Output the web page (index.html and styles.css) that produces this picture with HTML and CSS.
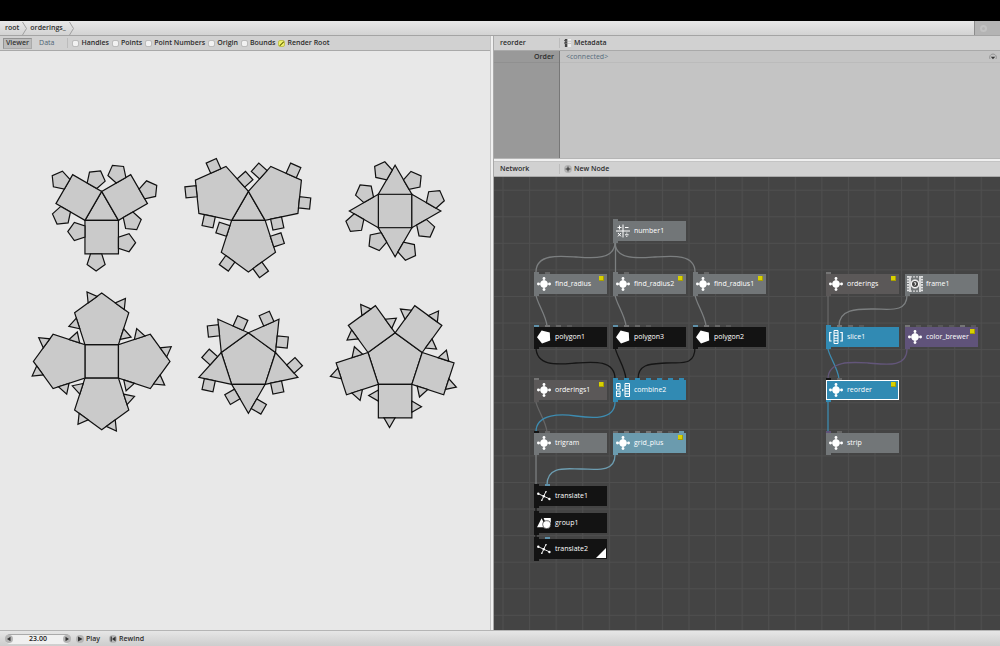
FILE: index.html
```html
<!DOCTYPE html>
<html lang="en">
<head>
<meta charset="utf-8">
<title>orderings_</title>
<link rel="stylesheet" href="styles.css">
</head>
<body>
<svg class="defs" aria-hidden="true">
  <defs>
    <polygon id="p3" points="-16.75,0 16.75,0 0,29.01"/>
    <polygon id="p4" points="-16.75,0 16.75,0 16.75,33.5 -16.75,33.5"/>
    <polygon id="p5" points="-16.75,0 16.75,0 27.1,31.86 0,51.55 -27.1,31.86"/>
    <g id="arm45"><use href="#p4"/>
      <use href="#p5" transform="translate(0 16.75) rotate(-90) translate(-5.58 16.75) scale(.333)"/>
      <use href="#p5" transform="translate(0 16.75) translate(-5.58 16.75) scale(.333)"/>
      <use href="#p5" transform="translate(0 16.75) rotate(90) translate(-5.58 16.75) scale(.333)"/></g>
    <g id="arm43"><use href="#p4"/>
      <use href="#p3" transform="translate(0 16.75) rotate(-90) translate(-5.58 16.75) scale(.333)"/>
      <use href="#p3" transform="translate(0 16.75) translate(-5.58 16.75) scale(.333)"/>
      <use href="#p3" transform="translate(0 16.75) rotate(90) translate(-5.58 16.75) scale(.333)"/></g>
    <g id="arm54"><use href="#p5"/>
      <use href="#p4" transform="translate(0 23.05) rotate(252) translate(-5.58 23.05) scale(.333)"/>
      <use href="#p4" transform="translate(0 23.05) rotate(324) translate(-5.58 23.05) scale(.333)"/>
      <use href="#p4" transform="translate(0 23.05) rotate(36) translate(-5.58 23.05) scale(.333)"/>
      <use href="#p4" transform="translate(0 23.05) rotate(108) translate(-5.58 23.05) scale(.333)"/></g>
    <g id="arm53"><use href="#p5"/>
      <use href="#p3" transform="translate(0 23.05) rotate(252) translate(-5.58 23.05) scale(.333)"/>
      <use href="#p3" transform="translate(0 23.05) rotate(324) translate(-5.58 23.05) scale(.333)"/>
      <use href="#p3" transform="translate(0 23.05) rotate(36) translate(-5.58 23.05) scale(.333)"/>
      <use href="#p3" transform="translate(0 23.05) rotate(108) translate(-5.58 23.05) scale(.333)"/></g>
    <g id="arm35"><use href="#p3"/>
      <use href="#p5" transform="translate(0 9.67) rotate(300) translate(-5.58 9.67) scale(.333)"/>
      <use href="#p5" transform="translate(0 9.67) rotate(60) translate(-5.58 9.67) scale(.333)"/></g>
    <g id="arm34"><use href="#p3"/>
      <use href="#p4" transform="translate(0 9.67) rotate(300) translate(-5.58 9.67) scale(.333)"/>
      <use href="#p4" transform="translate(0 9.67) rotate(60) translate(-5.58 9.67) scale(.333)"/></g>

    <symbol id="i-net" viewBox="0 0 14 14"><path d="M7 1.5v11M1.5 7h11" stroke="#fff" stroke-width="1.2"/><circle cx="7" cy="7" r="3.7" fill="#fff"/><circle cx="7" cy="1.4" r="1.4" fill="#fff"/><circle cx="7" cy="12.6" r="1.4" fill="#fff"/><circle cx="1.4" cy="7" r="1.4" fill="#fff"/><circle cx="12.6" cy="7" r="1.4" fill="#fff"/></symbol>
    <symbol id="i-num" viewBox="0 0 14 14"><path d="M7 .5v13M0 7h14M1.5 3.5h4M3.5 1.5v4M9 3.5h3.5M2 9l3 3.4M5 9l-3 3.4M9 10.8h3.6M10.8 8.6v1M10.8 12v1" stroke="#fff" stroke-width="1" fill="none"/></symbol>
    <symbol id="i-poly" viewBox="0 0 14 14"><path fill="#fff" d="M0 7.2 4.6.6 12.8 2.6 13.2 10.6 5 13.4Z"/></symbol>
    <symbol id="i-combine" viewBox="0 0 14 14"><path d="M.5.5h3.6v5.6H.5zM.5 8h3.6v5.5H.5zM.5 3.3h3.6M.5 10.8h3.6M9 .5h4.5v13H9zM9 3h4.5M9 5.6h4.5M9 8.2h4.5M9 10.8h4.5" stroke="#fff" stroke-width="1" fill="none"/><path fill="#fff" d="m6 5.8 2 1.3-2 1.3z"/></symbol>
    <symbol id="i-slice" viewBox="0 0 14 14"><path d="M2.6 2.5H.7v8.5h1.9M11.2 2.5h2v8.5h-2" stroke="#fff" stroke-width="1.2" fill="none"/><path d="M5 .5h4v13H5zM5 3h4M5 5.6h4M5 8.2h4M5 10.8h4" stroke="#fff" stroke-width="1" fill="none"/></symbol>
    <symbol id="i-move" viewBox="0 0 14 14"><path d="M.8 4.5 12.8 10M8.8 2.8 4.8 11.4" stroke="#fff" stroke-width=".9" fill="none"/><g fill="#fff"><circle cx="1.3" cy="4.7" r="1.2"/><circle cx="12.4" cy="10" r="1.2"/><circle cx="9" cy="2.8" r=".8"/><circle cx="4.8" cy="11.2" r=".8"/><circle cx="6.8" cy="7.2" r="1.2"/></g></symbol>
    <symbol id="i-group" viewBox="0 0 14 14"><path fill="#fff" d="M4.6 2.2 9 11.2H0zM6.6 2h7.2v6.8H9.5z"/><circle cx="9.7" cy="8.7" r="4" fill="#fff" stroke="#131313" stroke-width=".6"/></symbol>
    <symbol id="i-film" viewBox="0 0 16 16"><path d="M1 0v16M15 0v16" stroke="#fff" stroke-width="1.6" stroke-dasharray="1.7 1"/><path d="M3 0v16M13 0v16" stroke="#fff" stroke-width="1.4"/><path d="M3 .8h10M3 15.2h10" stroke="#d8d8d8" stroke-width="1.2" stroke-dasharray="2 1"/><circle cx="8" cy="8" r="4.3" fill="#fff" stroke="#d0d0d0" stroke-width=".8"/><circle cx="8" cy="8" r="3" fill="#444"/><path d="M6.9 6.8h1.8v1.2L7.8 9.5" stroke="#fff" stroke-width=".9" fill="none"/></symbol>
    <pattern id="grid" x="8.5" y="12.7" width="26.57" height="26.57" patternUnits="userSpaceOnUse"><path d="M.5 0v26.57M0 .5h26.57" stroke="#4f4f4f" stroke-width="1"/></pattern>
  </defs>
</svg>

<div class="app">
  <div class="titlebar"></div>
  <nav class="address">
    <button class="crumb">root</button>
    <svg class="chev" viewBox="0 0 5 13"><path d="M.5 0 4.5 6.5.5 13"/></svg>
    <button class="crumb">orderings_</button>
    <svg class="chev" viewBox="0 0 5 13"><path d="M.5 0 4.5 6.5.5 13"/></svg>
    <div class="busy"><span class="busy-dot"></span></div>
  </nav>

  <main class="panes">
    <section class="viewer-pane">
      <header class="bar">
        <button class="tab tab-on">Viewer</button>
        <button class="tab">Data</button>
        <div class="checks">
          <label class="check"><input type="checkbox">Handles</label>
          <label class="check"><input type="checkbox">Points</label>
          <label class="check"><input type="checkbox">Point Numbers</label>
          <label class="check"><input type="checkbox">Origin</label>
          <label class="check"><input type="checkbox">Bounds</label>
          <label class="check"><input type="checkbox" checked>Render Root</label>
        </div>
      </header>
      <svg class="drawing" viewBox="0 51 490 579" preserveAspectRatio="xMidYMin meet">
        <g transform="translate(101.7 210.7)">
          <use href="#p3" transform="rotate(180) translate(0 -9.67)"/>
          <use href="#arm45" transform="translate(0 9.67)"/>
          <use href="#arm45" transform="rotate(120) translate(0 9.67)"/>
          <use href="#arm45" transform="rotate(240) translate(0 9.67)"/>
        </g>
        <g transform="translate(248.4 210.7)">
          <use href="#p3" transform="rotate(180) translate(0 -9.67)"/>
          <use href="#arm54" transform="translate(0 9.67)"/>
          <use href="#arm54" transform="rotate(120) translate(0 9.67)"/>
          <use href="#arm54" transform="rotate(240) translate(0 9.67)"/>
        </g>
        <g transform="translate(395.1 211)">
          <use href="#p4" transform="translate(0 -16.75)"/>
          <use href="#arm35" transform="translate(0 16.75)"/>
          <use href="#arm35" transform="rotate(90) translate(0 16.75)"/>
          <use href="#arm35" transform="rotate(180) translate(0 16.75)"/>
          <use href="#arm35" transform="rotate(270) translate(0 16.75)"/>
        </g>
        <g transform="translate(101.7 361.4)">
          <use href="#p4" transform="translate(0 -16.75)"/>
          <use href="#arm53" transform="translate(0 16.75)"/>
          <use href="#arm53" transform="rotate(90) translate(0 16.75)"/>
          <use href="#arm53" transform="rotate(180) translate(0 16.75)"/>
          <use href="#arm53" transform="rotate(270) translate(0 16.75)"/>
        </g>
        <g transform="translate(248.4 361.3)">
          <use href="#p5" transform="rotate(180) translate(0 -23.05)"/>
          <use href="#arm34" transform="translate(0 23.05)"/>
          <use href="#arm34" transform="rotate(72) translate(0 23.05)"/>
          <use href="#arm34" transform="rotate(144) translate(0 23.05)"/>
          <use href="#arm34" transform="rotate(216) translate(0 23.05)"/>
          <use href="#arm34" transform="rotate(288) translate(0 23.05)"/>
        </g>
        <g transform="translate(395.1 361.3)">
          <use href="#p5" transform="rotate(180) translate(0 -23.05)"/>
          <use href="#arm43" transform="translate(0 23.05)"/>
          <use href="#arm43" transform="rotate(72) translate(0 23.05)"/>
          <use href="#arm43" transform="rotate(144) translate(0 23.05)"/>
          <use href="#arm43" transform="rotate(216) translate(0 23.05)"/>
          <use href="#arm43" transform="rotate(288) translate(0 23.05)"/>
        </g>
      </svg>
    </section>
    <div class="split-v"></div>
    <section class="side">
      <header class="bar">
        <span class="bar-title">reorder</span>
        <button class="tool"><svg class="tool-icon" viewBox="0 0 9 9"><path fill="#444" d="M1 0h3v9H1zM0 1h1v1H0zM0 4h1v1H0z"/><path fill="#eee" d="M4 0h4v9H4z"/><path d="M4 2.5h4M4 5h4" stroke="#aaa" stroke-width=".7"/><path d="M1.5 2.5H4M1.5 5H4" stroke="#999" stroke-width=".7"/></svg>Metadata</button>
      </header>
      <div class="params">
        <div class="param-names"><div class="param-name">Order</div></div>
        <div class="param-values">
          <div class="param-value">&lt;connected&gt;
            <button class="param-menu" aria-label="Options"><svg viewBox="0 0 8 8"><path d="M1 6a3.4 3.4 0 1 1 6 0" fill="none" stroke="#888" stroke-width=".8"/><path d="M1.8 3.8h4.4L4 6.2z" fill="#333"/></svg></button>
          </div>
        </div>
      </div>
      <div class="split-h"></div>
      <header class="bar">
        <span class="bar-title">Network</span>
        <button class="tool"><svg class="tool-icon" viewBox="0 0 9 9"><circle cx="4.5" cy="4.5" r="4.4" fill="#b2b2b2"/><path d="M4.5 1.8v5.4M1.8 4.5h5.4" stroke="#222" stroke-width="1"/></svg>New Node</button>
      </header>
      <div class="canvas">
        <svg class="wires">
          <rect width="100%" height="100%" fill="url(#grid)"/>
          <g class="w-grey">
            <path d="M121 65C121 84 96 81 82 80S42 76 42 95"/><path d="M121.500 65V95"/><path d="M121 65C121 84 146 81 161 80S201 76 201 95"/>
            <path d="M42 118C43 126 52 138 53 149"/><path d="M121 118C122 126 131 138 132 149"/><path d="M201 118C202 126 211 138 212 149"/>
            <path d="M42 278V308"/><path d="M413 118C413 136 395 132 380 132S345 131 345 149"/>
          </g>
          <g class="w-dim"><path d="M42 225C43 232 52 244 53 255"/><path d="M334 118V149"/></g>
          <g class="w-black">
            <path d="M42 170C42 191 67 187 82 186S121 182 121 202"/><path d="M121 170C122 178 131 190 132 202"/><path d="M201 170C201 190 186 185 172 186S144 186 144 202"/>
            <path d="M42 329V336M42 356V362"/>
          </g>
          <g class="w-blue"><path d="M121 225C121 244 96 241 82 239S42 236 42 255"/><path d="M334 172C335 179 344 191 345 202"/><path d="M334 225V255"/></g>
          <g class="w-steel"><path d="M121 278C121 296 101 292 87 292S53 288 53 308"/></g>
          <g class="w-purple"><path d="M413 172C413 192 389 187 374 186S334 183 334 202"/></g>
        </svg>

        <div class="node grey c1 r0"><div class="in"><i></i></div><svg class="icon"><use href="#i-num"/></svg>number1<i class="out"></i></div>

        <div class="node grey c0 r1"><div class="in"><i></i><i class="g2"></i></div><svg class="icon"><use href="#i-net"/></svg>find_radius<b class="flag"></b><i class="out"></i></div>
        <div class="node grey c1 r1"><div class="in"><i></i><i class="g2"></i></div><svg class="icon"><use href="#i-net"/></svg>find_radius2<b class="flag"></b><i class="out"></i></div>
        <div class="node grey c2 r1"><div class="in"><i></i><i class="g2"></i></div><svg class="icon"><use href="#i-net"/></svg>find_radius1<b class="flag"></b><i class="out"></i></div>
        <div class="node dark c3 r1"><div class="in"><i class="g1"></i></div><svg class="icon"><use href="#i-net"/></svg>orderings<b class="flag"></b><i class="out"></i></div>
        <div class="node grey c4 r1"><svg class="icon icon-film"><use href="#i-film"/></svg>frame1<i class="out"></i></div>

        <div class="node black c0 r2"><div class="in"><i class="pb"></i><i class="g1"></i><i class="g2"></i><i class="g3"></i></div><svg class="icon"><use href="#i-poly"/></svg>polygon1<i class="out"></i></div>
        <div class="node black c1 r2"><div class="in"><i class="pb"></i><i class="g1"></i><i class="g2"></i><i class="g3"></i></div><svg class="icon"><use href="#i-poly"/></svg>polygon3<i class="out"></i></div>
        <div class="node black c2 r2"><div class="in"><i class="pb"></i><i class="g1"></i><i class="g2"></i><i class="g3"></i></div><svg class="icon"><use href="#i-poly"/></svg>polygon2<i class="out"></i></div>
        <div class="node blue c3 r2"><div class="in"><i></i><i class="g1"></i><i class="g2"></i><i class="g3"></i></div><svg class="icon"><use href="#i-slice"/></svg>slice1<i class="out"></i></div>
        <div class="node purple c4 r2"><div class="in"><i class="g1"></i><i class="g3"></i><i class="g3"></i><i class="g3"></i><i class="g3"></i><i class="g1"></i><i class="g3"></i></div><svg class="icon"><use href="#i-net"/></svg>color_brewer<b class="flag"></b><i class="out"></i></div>

        <div class="node dark c0 r3"><div class="in"><i class="g1"></i></div><svg class="icon"><use href="#i-net"/></svg>orderings1<b class="flag"></b><i class="out"></i></div>
        <div class="node blue c1 r3"><div class="in"><i></i><i></i><i></i><i></i><i></i><i></i><i></i></div><svg class="icon"><use href="#i-combine"/></svg>combine2<i class="out"></i></div>
        <div class="node blue selected c3 r3"><div class="in"><i class="pk"></i><i class="g2"></i></div><svg class="icon"><use href="#i-net"/></svg>reorder<b class="flag"></b><i class="out"></i></div>

        <div class="node grey c0 r4"><div class="in"><i class="pk"></i><i class="g2"></i></div><svg class="icon"><use href="#i-net"/></svg>trigram<i class="out"></i></div>
        <div class="node steel c1 r4"><div class="in"><i class="g2"></i><i class="g1"></i><i class="g1"></i><i class="g1"></i><i class="g1"></i><i class="g3"></i><i></i></div><svg class="icon"><use href="#i-net"/></svg>grid_plus<b class="flag"></b><i class="out"></i></div>
        <div class="node grey c3 r4"><div class="in"><i class="pp"></i><i class="g2"></i></div><svg class="icon"><use href="#i-net"/></svg>strip<i class="out"></i></div>

        <div class="node black c0 r5"><div class="in"><i></i><i class="pb"></i></div><svg class="icon"><use href="#i-move"/></svg>translate1<i class="out"></i></div>
        <div class="node black c0 r6"><div class="in"><i></i></div><svg class="icon"><use href="#i-group"/></svg>group1<i class="out"></i></div>
        <div class="node black c0 r7"><div class="in"><i></i><i class="pb"></i></div><svg class="icon"><use href="#i-move"/></svg>translate2<b class="rendered"></b><i class="out"></i></div>
      </div>
    </section>
  </main>

  <footer class="player">
    <div class="stepper">
      <button class="round" aria-label="Previous frame"><svg viewBox="0 0 8 8"><path d="M5.5 1.8v4.4L2 4z"/></svg></button>
      <input class="frame" type="text" value="23.00" aria-label="Frame">
      <button class="round" aria-label="Next frame"><svg viewBox="0 0 8 8"><path d="M2.5 1.8v4.4L6 4z"/></svg></button>
    </div>
    <button class="play"><span class="round"><svg viewBox="0 0 8 8"><path d="M2 1.4v5.2L6.6 4z"/></svg></span>Play</button>
    <button class="play"><span class="round"><svg viewBox="0 0 8 8"><path d="M1.6 1.4h1.2v5.2H1.6zM6.6 1.4v5.2L3 4z"/></svg></span>Rewind</button>
  </footer>
</div>
</body>
</html>
```

FILE: styles.css
```css
* { box-sizing: border-box; }
body { margin: 0; font: 7px/10px "Open Sans", "Noto Sans", sans-serif; color: #2c2c2c; background: #e8e8e8; }
button { font: inherit; color: inherit; background: none; border: 0; padding: 0; margin: 0; display: flex; align-items: center; }
.defs { position: absolute; width: 0; height: 0; }
.app { min-height: 100vh; display: flex; flex-direction: column; }
.titlebar { height: 21px; background: #000; }

.address { height: 15px; display: flex; align-items: center; padding-left: 5px; font-weight: 600; background: linear-gradient(#e8e8e8, #d3d3d3); border-bottom: 1px solid #a4a4a4; }
.chev { width: 5px; height: 13px; margin: 0 3px; fill: none; stroke: #a0a0a0; }
.busy { margin-left: auto; width: 26px; align-self: stretch; background: #b4b4b4; border-left: 1px solid #8c8c8c; display: flex; align-items: center; padding-left: 5px; }
.busy-dot { width: 7px; height: 7px; border-radius: 50%; border: 2px solid #c2c2c2; }

.panes { flex: 1; display: grid; grid-template-columns: 490fr 4px 506fr; }
.viewer-pane, .side { display: flex; flex-direction: column; min-width: 0; }
.bar { height: 15px; flex: none; display: flex; align-items: center; font-weight: 600; background: #d1d1d1; border-bottom: 1px solid #a9a9a9; }
.tab { height: 11px; padding: 0 2px; margin-left: 3px; font-weight: 400; color: #4d6473; border: 1px solid transparent; }
.tab + .tab { margin-left: 4px; }
.tab-on { font-weight: 600; color: #333; background: #bcbcbc; border-color: #939393 #aaa #aaa #939393; }
.checks { display: flex; align-items: center; gap: 4px; margin-left: 10px; padding-left: 5px; border-left: 1px solid #bcbcbc; }
.check { display: flex; align-items: center; gap: 3px; white-space: nowrap; }
.check input { appearance: none; width: 5px; height: 5px; margin: 0; background: #f2f2f2; border-radius: 1px; outline: 1px solid #bdbdbd; }
.check input:checked { background: linear-gradient(135deg, #eef06a 50%, #8c8c20 50% 65%, #eef06a 65%); outline-color: #c2c250; }
.drawing { display: block; width: 100%; fill: #cacaca; stroke: #111; stroke-width: 1.2; }
.drawing use, .defs polygon { vector-effect: non-scaling-stroke; }

.split-v { background: #f0f0f0; border-left: 1px solid #c4c4c4; border-right: 1px solid #aaa; }
.split-h { height: 4px; background: #f0f0f0; border-top: 1px solid #b5b5b5; border-bottom: 1px solid #c4c4c4; }
.bar-title { width: 66px; padding-left: 6px; border-right: 1px solid #bcbcbc; }
.tool { gap: 2px; margin-left: 4px; }
.tool-icon { width: 8px; height: 8px; }

.params { height: 107px; display: flex; background: #c4c4c4; }
.param-names { width: 66px; background: #999; border-right: 1px solid #777; }
.param-name { height: 12px; padding: 1px 5px 0 0; text-align: right; font-weight: 600; border-bottom: 1px solid #909090; }
.param-values { flex: 1; }
.param-value { height: 12px; display: flex; justify-content: space-between; align-items: center; padding: 0 3px 0 6px; color: #566c7c; border-bottom: 1px solid #bbb; }
.param-menu svg { width: 8px; height: 8px; display: block; }

.canvas { flex: 1; position: relative; overflow: hidden; background: #444; }
.wires { position: absolute; inset: 0; width: 100%; height: 100%; fill: none; stroke-width: 1.3; }
.w-grey { stroke: #7c7f80; }
.w-dim { stroke: #666; }
.w-black { stroke: #151515; }
.w-blue { stroke: #3d8cb1; }
.w-steel { stroke: #6d9db1; }
.w-purple { stroke: #63567a; }

.node { position: absolute; width: 73px; height: 20px; display: flex; align-items: center; gap: 4px; padding-left: 3px; color: #fff; background: var(--c); }
.icon { width: 14px; height: 14px; flex: none; }
.icon-film { width: 16px; height: 16px; margin: 0 -1px; }
.grey { --c: #727678; }
.dark { --c: #5b5858; }
.black { --c: #131313; }
.blue { --c: #318ab3; }
.steel { --c: #6b9bae; }
.purple { --c: #60537a; }
.selected { box-shadow: inset 0 0 0 1px #fff; }
.c0 { left: 40px; }
.c1 { left: 119px; }
.c2 { left: 199px; }
.c3 { left: 332px; }
.c4 { left: 411px; }
.r0 { top: 44px; }
.r1 { top: 97px; }
.r2 { top: 150px; }
.r3 { top: 203px; }
.r4 { top: 256px; }
.r5 { top: 309px; }
.r6 { top: 336px; }
.r7 { top: 362px; }
.in { position: absolute; left: 0; top: -2px; display: flex; gap: 6px; }
.in i { width: 5px; height: 2px; background: var(--c); }
.in .g1 { background: #757575; }
.in .g2 { background: #666; }
.in .g3 { background: #585858; }
.in .pb { background: #5f91aa; }
.in .pk { background: #131313; }
.in .pp { background: #60537a; }
.out { position: absolute; left: 0; bottom: -2px; width: 5px; height: 2px; background: var(--c); }
.flag { position: absolute; right: 3px; top: 2px; width: 5px; height: 5px; background: #d8d000; border: 1px solid #a8a000; border-width: 0 1px 1px 0; }
.rendered { position: absolute; right: 1px; bottom: 1px; width: 10px; height: 10px; background: #fff; clip-path: polygon(100% 0, 100% 100%, 0 100%); }

.player { height: 16px; display: flex; align-items: center; gap: 5px; padding-left: 5px; font-weight: 600; background: linear-gradient(#e6e6e6, #cdcdcd); border-top: 1px solid #b5b5b5; }
.stepper { display: flex; align-items: center; height: 10px; border-radius: 5px; background: #f0f0f0; box-shadow: inset 0 1px 0 #aaa; }
.frame { width: 50px; height: 10px; padding: 0; border: 0; background: none; font: inherit; color: #222; text-align: center; }
.round { width: 8px; height: 8px; border-radius: 50%; background: #b5b5b5; display: block; }
.round svg { display: block; width: 8px; height: 8px; fill: #333; }
.play { gap: 2px; }
.play + .play { margin-left: 4px; }
```
